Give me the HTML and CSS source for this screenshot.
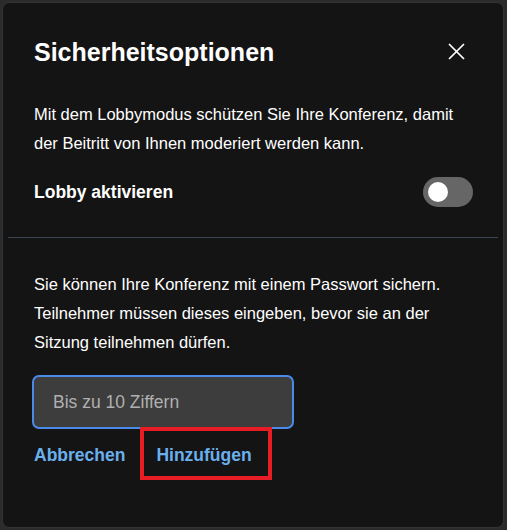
FILE: index.html
```html
<!DOCTYPE html>
<html lang="de">
<head>
<meta charset="utf-8">
<title>Sicherheitsoptionen</title>
<link rel="stylesheet" href="styles.css">
</head>
<body>
<div class="dialog">
  <div class="header">
    <h1 class="title">Sicherheitsoptionen</h1>
    <button class="close" aria-label="Schließen">
      <svg width="17" height="17" viewBox="0 0 17 17"><path d="M1 1 L16 16 M16 1 L1 16" stroke="#fff" stroke-width="1.7" fill="none"/></svg>
    </button>
  </div>
  <section class="section">
    <p class="text">Mit dem Lobbymodus schützen Sie Ihre Konferenz, damit der Beitritt von Ihnen moderiert werden kann.</p>
    <div class="toggle-row">
      <span class="toggle-label">Lobby aktivieren</span>
      <span class="toggle"><span class="knob"></span></span>
    </div>
  </section>
  <hr class="sep">
  <section class="section section2">
    <p class="text">Sie können Ihre Konferenz mit einem Passwort sichern. Teilnehmer müssen dieses eingeben, bevor sie an der Sitzung teilnehmen dürfen.</p>
    <div class="input">Bis zu 10 Ziffern</div>
    <div class="actions">
      <span class="link">Abbrechen</span>
      <span class="link add">Hinzufügen<span class="mark"></span></span>
    </div>
  </section>
</div>
</body>
</html>
```
FILE: styles.css
```css
* { box-sizing: border-box; }
html, body { margin: 0; padding: 0; }
body {
  background: #2b2b2b;
  font-family: "Liberation Sans", Arial, sans-serif;
  color: #fff;
  width: 507px;
  height: 530px;
  overflow: hidden;
  padding: 3px;
}
.dialog {
  width: 500px;
  height: 524px;
  background: #141414;
  border-radius: 6px;
  box-shadow: 0 0 0 1px #333;
  padding: 0 5px;
}
.header {
  display: flex;
  justify-content: space-between;
  align-items: center;
  padding: 33px 33px 0 26px;
  height: 64px;
}
.title {
  margin: 0;
  font-size: 25px;
  font-weight: 700;
  line-height: 30px;
}
.close {
  background: none;
  border: 0;
  padding: 0;
  width: 17px;
  height: 17px;
  display: flex;
}
.section { padding: 0 25px 0 26px; }
.text {
  margin: 0;
  font-size: 16.5px;
  line-height: 29px;
  color: #fff;
}
.section .text:first-child { margin-top: 33px; }
.toggle-row {
  display: flex;
  justify-content: space-between;
  align-items: center;
  margin-top: 19px;
}
.toggle-label { font-size: 17.5px; font-weight: 700; }
.toggle {
  width: 50px;
  height: 30px;
  border-radius: 15px;
  background: #666;
  display: flex;
  align-items: center;
  padding-left: 5px;
}
.knob { width: 20px; height: 20px; border-radius: 50%; background: #fff; }
.sep {
  border: 0;
  height: 1px;
  background: #3a4652;
  margin: 30px 0 0;
}
.section2 .text:first-child { margin-top: 32px; }
.input {
  margin-top: 18px;
  margin-left: -2px;
  width: 262px;
  height: 54px;
  border: 2px solid #4a8ae8;
  border-radius: 7px;
  background: #3d3d3d;
  color: #b0b0b0;
  font-size: 17.5px;
  display: flex;
  align-items: center;
  padding-left: 19px;
}
.actions {
  display: flex;
  gap: 31px;
  margin-top: 15px;
}
.link { color: #6ab0ee; font-size: 17.5px; font-weight: 700; line-height: 22px; }
.add { position: relative; }
.mark {
  position: absolute;
  left: -16px;
  top: -17px;
  width: 132px;
  height: 53px;
  border: 4px solid #e81c24;
}
```
